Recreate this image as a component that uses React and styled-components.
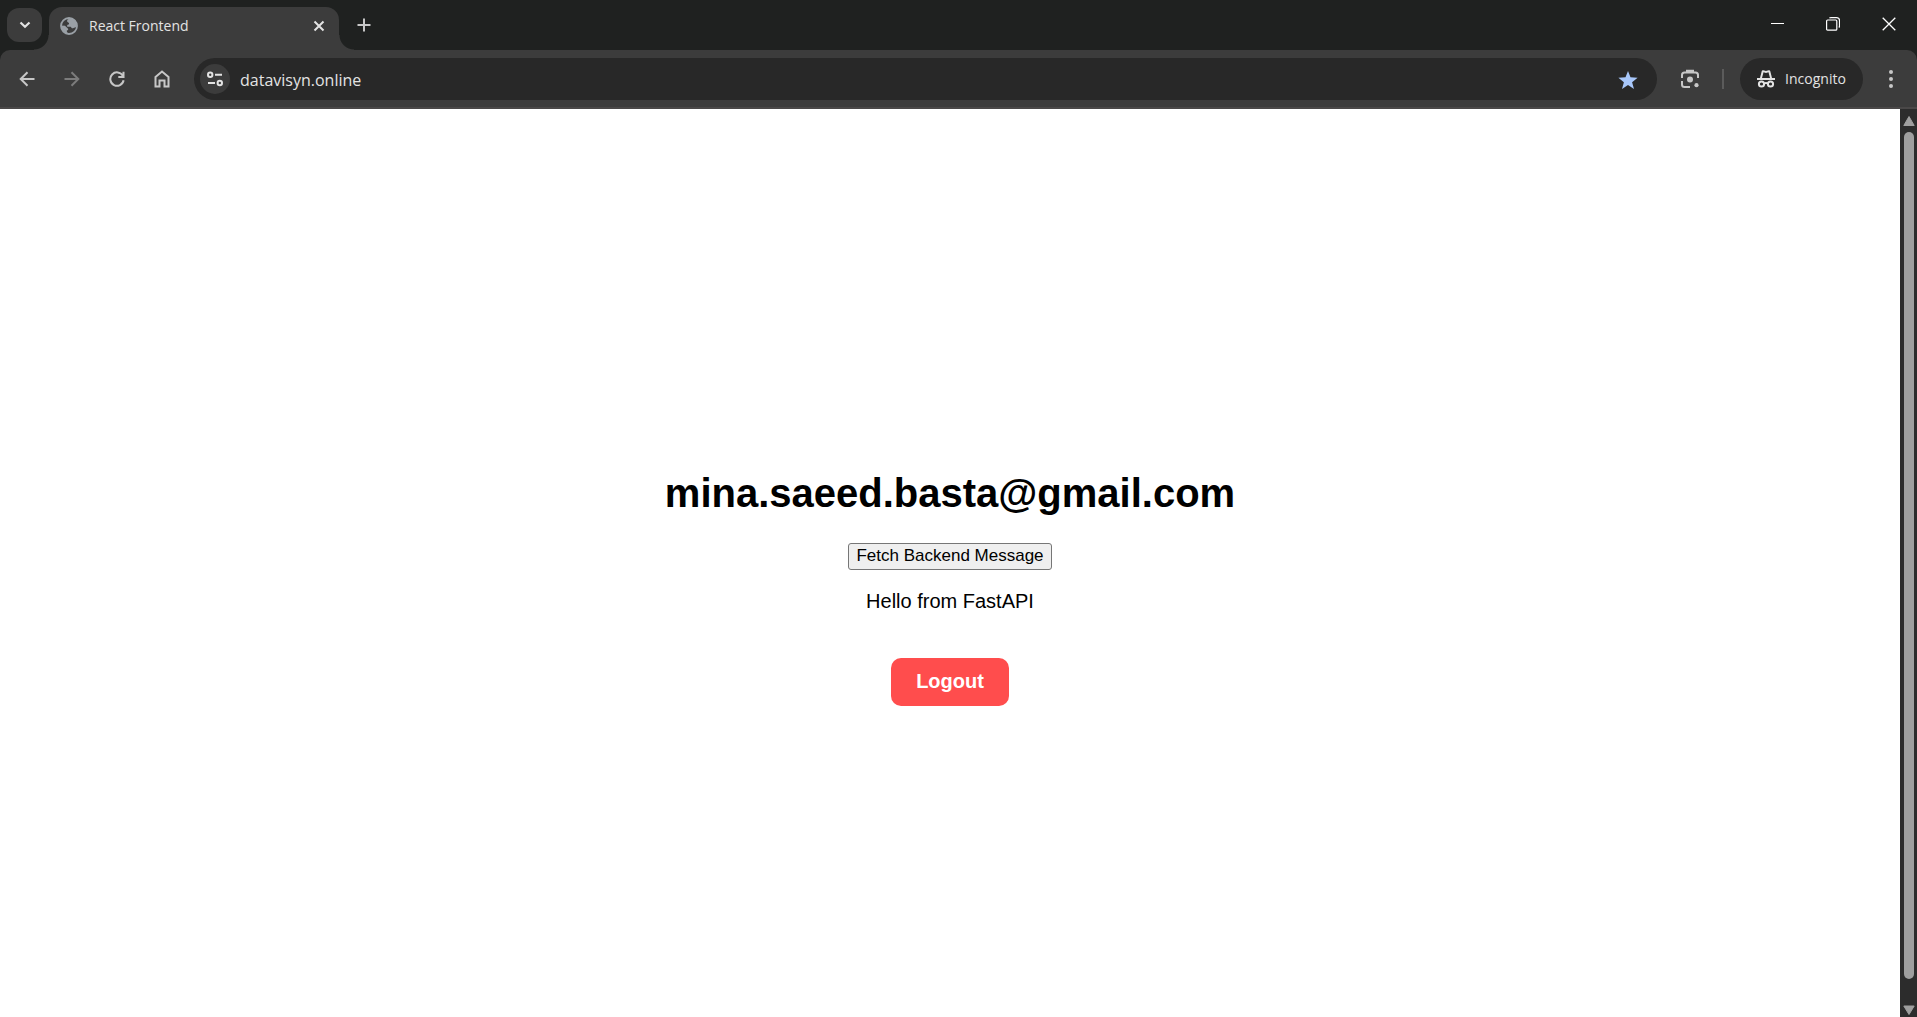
import React, { useState } from "react";
import styled, { createGlobalStyle } from "styled-components";

const color = {
  strip: "#1f2120",
  chrome: "#3c3c3c",
  field: "#282828",
  edge: "#4a4848",
  icon: "#c7c7c7",
  text: "#e3e3e3",
  track: "#2c2c2c",
  thumb: "#9f9f9f",
};

const GlobalStyle = createGlobalStyle`
  *, *::before, *::after { box-sizing: border-box; }
  body { margin: 0; background: #fff; }
`;

const Window = styled.div`
  display: flex;
  flex-direction: column;
  height: 100vh;
  background: ${color.strip};
  font-family: "Open Sans", "Noto Sans", sans-serif;
`;

const PlainButton = styled.button`
  display: flex;
  align-items: center;
  justify-content: center;
  flex: none;
  padding: 0;
  border: 0;
  background: transparent;
  color: ${(p) => p.$color || color.icon};

  svg { display: block; }
`;

const TabStrip = styled.div`
  display: flex;
  align-items: flex-start;
  height: 50px;
  flex: none;
  padding-left: 7px;
`;

const TabSearch = styled(PlainButton)`
  width: 35px;
  height: 34px;
  margin: 8px 7px 0 0;
  border-radius: 12px;
  background: ${color.chrome};
`;

const Tab = styled.div`
  position: relative;
  display: flex;
  align-items: center;
  width: 290px;
  height: 43px;
  margin-top: 7px;
  padding: 0 10px 6px 11px;
  border-radius: 13px 13px 0 0;
  background: ${color.chrome};

  &::before,
  &::after {
    content: "";
    position: absolute;
    bottom: 0;
    width: 15px;
    height: 15px;
  }
  &::before {
    right: 100%;
    background: radial-gradient(circle at 0 0, transparent 14px, ${color.chrome} 15px);
  }
  &::after {
    left: 100%;
    background: radial-gradient(circle at 100% 0, transparent 14px, ${color.chrome} 15px);
  }
`;

const TabTitle = styled.span`
  flex: 1;
  margin-left: 11px;
  color: ${color.text};
  font-size: 14px;
  line-height: 20px;
`;

const TabClose = styled(PlainButton)`
  width: 20px;
  height: 20px;
`;

const NewTab = styled(PlainButton)`
  width: 34px;
  height: 34px;
  margin: 8px 0 0 8px;
`;

const WindowControls = styled.div`
  display: flex;
  margin-left: auto;
`;

const WindowButton = styled(PlainButton)`
  width: 56px;
  height: 48px;
`;

const Toolbar = styled.div`
  display: flex;
  align-items: center;
  flex: none;
  height: 59px;
  padding: 1px 14px 0 4px;
  border-bottom: 2px solid ${color.edge};
  border-radius: 10px 10px 0 0;
  background: ${color.chrome};
`;

const NavButton = styled(PlainButton)`
  width: 45px;
  height: 42px;
`;

const AddressBar = styled.label`
  display: flex;
  align-items: center;
  flex: 1;
  height: 42px;
  margin-left: 10px;
  padding: 0 19px 0 6px;
  border-radius: 21px;
  background: ${color.field};
`;

const SiteInfo = styled(PlainButton)`
  width: 30px;
  height: 30px;
  border-radius: 50%;
  background: ${color.chrome};
`;

const AddressInput = styled.input`
  flex: 1;
  min-width: 0;
  margin-left: 10px;
  padding: 1px 0 0;
  border: 0;
  outline: 0;
  background: transparent;
  color: ${color.text};
  font: 16px/24px "Open Sans", "Noto Sans", sans-serif;
`;

const LensButton = styled(PlainButton)`
  width: 32px;
  height: 42px;
  margin-left: 17px;
`;

const Divider = styled.span`
  width: 2px;
  height: 20px;
  margin: 0 16px;
  background: #5b5b5b;
`;

const Incognito = styled(PlainButton)`
  gap: 10px;
  width: 123px;
  height: 42px;
  border-radius: 21px;
  background: ${color.field};
  font: 14px/20px "Open Sans", "Noto Sans", sans-serif;
`;

const MenuButton = styled(PlainButton)`
  width: 24px;
  height: 42px;
  margin-left: 16px;
`;

const Viewport = styled.div`
  display: flex;
  flex: 1;
  min-height: 0;
  background: #fff;
`;

const Page = styled.main`
  display: flex;
  flex: 1;
  flex-direction: column;
  align-items: center;
  justify-content: center;
  padding-top: 24px;
  color: #000;
  font-family: "Liberation Sans", Arial, sans-serif;
`;

const Heading = styled.h1`
  margin: 27px 0;
  font-size: 40px;
  line-height: 45px;
`;

const FetchButton = styled.button`
  padding: 1px 7px 3px;
  border: 1px solid #767676;
  border-radius: 3px;
  background: #efefef;
  color: #000;
  font: 17px/21px "Liberation Sans", Arial, sans-serif;
`;

const Message = styled.p`
  margin: 20px 0 45px;
  font-size: 20px;
  line-height: 23px;
`;

const LogoutButton = styled.button`
  padding: 12px 25px 13px;
  border: 0;
  border-radius: 10px;
  background: #ff4d4d;
  color: #fff;
  font: bold 20px/23px "Liberation Sans", Arial, sans-serif;
`;

const Scrollbar = styled.div`
  display: flex;
  flex-direction: column;
  align-items: center;
  flex: none;
  width: 17px;
  padding-left: 1px;
  background: ${color.track};
`;

const ScrollButton = styled(PlainButton)`
  width: 16px;
  height: ${(p) => p.$height}px;
`;

const ScrollTrack = styled.div`
  display: flex;
  justify-content: center;
  flex: 1;
  width: 100%;
  padding-bottom: 24px;
`;

const ScrollThumb = styled.div`
  width: 10px;
  border-radius: 5px;
  background: ${color.thumb};
`;

const Icon = ({ size = 20, box = 20, stroke = 2, children }) => (
  <svg
    width={size}
    height={size}
    viewBox={`0 0 ${box} ${box}`}
    fill="none"
    stroke="currentColor"
    strokeWidth={stroke}
    aria-hidden="true"
  >
    {children}
  </svg>
);

const Globe = () => (
  <Icon size={18} box={18} stroke={1.8}>
    <g color="#9aa0a6" stroke="currentColor">
      <circle cx="9" cy="9" r="8" />
      <path
        d="M9.500 1.200 7.200 3v1.800L9 6v1.300l-1.800.8v1.600h3.500l1.200 1.600H13l3.200-1.200L17 7l-1.500-3.500L12.800 1.400ZM1 8.600l4 .1 3.100 3v1.500H6.900V15l2 2-3.200-.8L2 13Z"
        fill="currentColor"
        stroke="none"
      />
    </g>
  </Icon>
);

export default function App() {
  const [address, setAddress] = useState("datavisyn.online");

  return (
    <>
      <GlobalStyle />
      <Window>
        <TabStrip>
          <TabSearch aria-label="Search tabs" $color={color.text}>
            <Icon size={12} box={12} stroke={2.2}>
              <path d="m1.500 3.500 4.500 4.300 4.500-4.300" />
            </Icon>
          </TabSearch>
          <Tab>
            <Globe />
            <TabTitle>React Frontend</TabTitle>
            <TabClose aria-label="Close tab" $color={color.text}>
              <Icon size={12} box={12}>
                <path d="m1.500 1.500 9 9m0-9-9 9" />
              </Icon>
            </TabClose>
          </Tab>
          <NewTab aria-label="New tab">
            <Icon size={14} box={14}>
              <path d="M7 .5v13M.5 7h13" />
            </Icon>
          </NewTab>
          <WindowControls>
            <WindowButton aria-label="Minimize" $color="#fff">
              <Icon size={13} box={13} stroke={1}>
                <path d="M0 5.500h13" />
              </Icon>
            </WindowButton>
            <WindowButton aria-label="Restore" $color="#fff">
              <Icon size={14} box={14} stroke={1.2}>
                <rect x=".6" y="3" width="10.200" height="10.200" rx="1" />
                <path d="M3.400 1.200Q4 .6 5 .6h5.500q3 0 3 3V9q0 1-.7 1.500" />
              </Icon>
            </WindowButton>
            <WindowButton aria-label="Close" $color="#fff">
              <Icon size={14} box={14} stroke={1.3}>
                <path d="m.7.7 12.600 12.600m0-12.600L.7 13.300" />
              </Icon>
            </WindowButton>
          </WindowControls>
        </TabStrip>

        <Toolbar>
          <NavButton aria-label="Back">
            <Icon size={16} box={16}>
              <path d="M15.500 8H2M8.500 1.200 1.700 8l6.800 6.800" />
            </Icon>
          </NavButton>
          <NavButton aria-label="Forward" disabled $color="#7c7c7c">
            <Icon size={16} box={16}>
              <path d="M.5 8H14M7.500 1.200 14.300 8l-6.800 6.800" />
            </Icon>
          </NavButton>
          <NavButton aria-label="Reload">
            <Icon size={16} box={16}>
              <path d="M14.600 9.300A6.700 6.700 0 1 1 13.800 4.700L15 6.500M14.500 .8v5.200H9.300" />
            </Icon>
          </NavButton>
          <NavButton aria-label="Home">
            <Icon size={18} box={18}>
              <path d="M2.500 7 9 1.500 15.500 7v9.500H11.500v-6h-5v6h-4Z" />
            </Icon>
          </NavButton>
          <AddressBar>
            <SiteInfo aria-label="Site information" $color={color.text}>
              <Icon size={16} box={16}>
                <circle cx="3.200" cy="3.800" r="2.200" />
                <path d="M8 3.800h7M1 12h7" />
                <circle cx="12.800" cy="12" r="2.200" />
              </Icon>
            </SiteInfo>
            <AddressInput
              aria-label="Address"
              value={address}
              onChange={(e) => setAddress(e.target.value)}
            />
            <PlainButton aria-label="Edit bookmark" $color="#a8c7fa">
              <Icon stroke={0}>
                <path
                  fill="currentColor"
                  d="m10 2 2.500 6.300 7.100.4-5.500 4.500 1.900 6.800-6-3.900-6 3.900 1.900-6.800L.4 8.700l7.100-.4Z"
                />
              </Icon>
            </PlainButton>
          </AddressBar>
          <LensButton aria-label="Search with Lens">
            <Icon>
              <path d="M2 9V6q0-2.500 2.500-2.500h11Q18 3.500 18 6v3M2 12v3.500Q2 18 4.500 18H10M7 3V1.800h6V3" />
              <circle cx="10" cy="10.500" r="3" fill="currentColor" stroke="none" />
              <circle cx="16.500" cy="16.200" r="2.100" fill="currentColor" stroke="none" />
            </Icon>
          </LensButton>
          <Divider />
          <Incognito $color={color.text}>
            <Icon size={18} box={18}>
              <path
                fill="currentColor"
                stroke="none"
                d="M0 8h18v2H0ZM3 8l1.700-6.700Q5 0 6.300.3L9 1l2.700-.7Q13 0 13.300 1.300L15 8h-2l-1.500-5.700L9 3l-2.500-.7L5 8Z"
              />
              <circle cx="4.500" cy="14" r="2.600" />
              <circle cx="13.500" cy="14" r="2.600" />
              <path d="M7 13.500q2-1.200 4 0" />
            </Icon>
            Incognito
          </Incognito>
          <MenuButton aria-label="Menu">
            <Icon stroke={0}>
              <g fill="currentColor">
                <circle cx="10" cy="3" r="2" />
                <circle cx="10" cy="10" r="2" />
                <circle cx="10" cy="17" r="2" />
              </g>
            </Icon>
          </MenuButton>
        </Toolbar>

        <Viewport>
          <Page>
            <Heading>mina.saeed.basta@gmail.com</Heading>
            <FetchButton>Fetch Backend Message</FetchButton>
            <Message>Hello from FastAPI</Message>
            <LogoutButton>Logout</LogoutButton>
          </Page>
          <Scrollbar>
            <ScrollButton aria-label="Scroll up" $color={color.thumb} $height={23}>
              <Icon size={12} box={12} stroke={1}>
                <path fill="currentColor" strokeLinejoin="round" d="M6 1.500.8 10.500h10.400Z" />
              </Icon>
            </ScrollButton>
            <ScrollTrack>
              <ScrollThumb />
            </ScrollTrack>
            <ScrollButton aria-label="Scroll down" $color={color.thumb} $height={14}>
              <Icon size={12} box={12} stroke={1}>
                <path fill="currentColor" strokeLinejoin="round" d="M6 10.500.8 2h10.400Z" />
              </Icon>
            </ScrollButton>
          </Scrollbar>
        </Viewport>
      </Window>
    </>
  );
}
